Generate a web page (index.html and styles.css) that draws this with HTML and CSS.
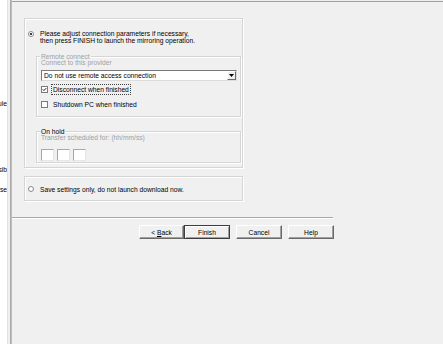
FILE: index.html
```html
<!DOCTYPE html>
<html>
<head>
<meta charset="utf-8">
<link rel="stylesheet" href="styles.css">
</head>
<body>
<div class="window">
  <aside class="side">
    <span class="side-label lbl-1">Schedule</span>
    <span class="side-label lbl-2">Possib</span>
    <span class="side-label lbl-3">Browse</span>
  </aside>
  <div class="divider"></div>
  <main class="pane">
    <section class="box box-main">
      <div class="radio-row">
        <span class="radio checked"></span>
        <span class="radio-text">Please adjust connection parameters if necessary,<br>then press FINISH to launch the mirroring operation.</span>
      </div>
      <div class="group group-remote">
        <span class="legend disabled">Remote connect</span>
        <div class="caption disabled">Connect to this provider</div>
        <div class="select">
          <span class="select-text">Do not use remote access connection</span>
          <span class="select-btn"><svg width="5" height="3" viewBox="0 0 5 3"><path d="M0 0H5L2.5 3Z" fill="#000"/></svg></span>
        </div>
        <div class="check-row row-1">
          <span class="check"><svg width="7" height="7" viewBox="0 0 7 7"><path d="M1 3.2L2.7 5L6 1.5" fill="none" stroke="#000" stroke-width="1.2"/></svg></span>
          <span class="check-text focused">Disconnect when finished</span>
        </div>
        <div class="check-row row-2">
          <span class="check"></span>
          <span class="check-text">Shutdown PC when finished</span>
        </div>
      </div>
      <div class="group group-hold">
        <span class="legend">On hold</span>
        <div class="caption disabled">Transfer scheduled for: (hh/mm/ss)</div>
        <div class="time-fields">
          <span class="field"></span>
          <span class="field"></span>
          <span class="field"></span>
        </div>
      </div>
    </section>
    <section class="box box-save">
      <span class="radio"></span>
      <span class="radio-text">Save settings only, do not launch download now.</span>
    </section>
    <hr class="sep">
    <div class="buttons">
      <button class="btn btn-back">&lt; <u>B</u>ack</button>
      <button class="btn btn-default">Finish</button>
      <button class="btn btn-cancel">Cancel</button>
      <button class="btn btn-help">Help</button>
    </div>
  </main>
</div>
</body>
</html>
```
FILE: styles.css
```css
html, body {
  margin: 0;
  padding: 0;
  background: #f0f0f0;
}
body {
  width: 443px;
  height: 344px;
  overflow: hidden;
  font-family: "Liberation Sans", Arial, sans-serif;
  font-size: 6.7px;
  line-height: 7px;
  color: #000;
}
.window {
  display: flex;
  height: 344px;
}
.side {
  width: 7px;
  flex: none;
  background: #fff;
  border-right: 1px solid #e2e2e2;
  display: flex;
  flex-direction: column;
  align-items: flex-end;
  overflow: hidden;
}
.side-label {
  display: flex;
  justify-content: flex-end;
  width: 7px;
  white-space: nowrap;
  line-height: 7px;
}
.lbl-1 { margin-top: 100px; }
.lbl-2 { margin-top: 59px; }
.lbl-3 { margin-top: 13px; }
.divider {
  width: 2px;
  flex: none;
  margin-left: 2px;
  background: linear-gradient(to right, #a0a0a0, #c8c8c8);
}
.pane {
  flex: 1;
  margin-top: 1px;
  border-top: 1px solid #a0a0a0;
}
.box {
  box-sizing: border-box;
  width: 219px;
  margin-left: 12px;
  border: 1px solid #d5d5d5;
  box-shadow: inset 1px 1px 0 #fff, 1px 1px 0 #fff;
}
.box-main {
  margin-top: 16px;
  height: 150px;
  padding: 11px 0 0 0;
}
.radio-row {
  display: flex;
  align-items: flex-start;
  padding-left: 3px;
}
.radio-row .radio {
  margin-top: 1px;
}
.radio {
  box-sizing: border-box;
  width: 6px;
  height: 6px;
  flex: none;
  border-radius: 50%;
  border: 1px solid #8a8a8a;
  background: #fff;
  margin-right: 6px;
  display: inline-flex;
  align-items: center;
  justify-content: center;
}
.radio.checked::after {
  content: "";
  width: 2px;
  height: 2px;
  border-radius: 50%;
  background: #000;
}
.radio-text {
  white-space: nowrap;
}
.group {
  position: relative;
  box-sizing: border-box;
  width: 205px;
  margin-left: 11px;
  border: 1px solid #d5d5d5;
  box-shadow: inset 1px 1px 0 #fff, 1px 1px 0 #fff;
  padding-left: 4px;
}
.legend {
  position: absolute;
  top: -4px;
  left: 3px;
  background: #f0f0f0;
  padding: 0 1px;
  white-space: nowrap;
}
.disabled {
  color: #a0a0a0;
}
.group-remote {
  margin-top: 12px;
  height: 61px;
  padding-top: 2px;
}
.caption {
  white-space: nowrap;
}
.select {
  box-sizing: border-box;
  display: flex;
  align-items: center;
  width: 196px;
  height: 11px;
  margin-top: 4px;
  background: #fff;
  border: 1px solid #7a7a7a;
  border-right-color: #dcdcdc;
  border-bottom-color: #dcdcdc;
}
.select-text {
  flex: 1;
  padding-left: 2px;
  white-space: nowrap;
}
.select-btn {
  box-sizing: border-box;
  width: 9px;
  height: 9px;
  display: flex;
  align-items: center;
  justify-content: center;
  background: #f0f0f0;
  border: 1px solid #fff;
  border-right-color: #6a6a6a;
  border-bottom-color: #6a6a6a;
}
.check-row {
  display: flex;
  align-items: center;
  height: 9px;
}
.row-1 { margin-top: 4px; }
.row-2 { margin-top: 6px; }
.check {
  box-sizing: border-box;
  width: 7px;
  height: 7px;
  flex: none;
  background: #fff;
  border: 1px solid #7a7a7a;
  display: flex;
  align-items: center;
  justify-content: center;
  margin-right: 3px;
}
.check svg { display: block; }
.check-text {
  white-space: nowrap;
  padding: 1px 1px;
  border: 1px solid transparent;
}
.check-text.focused {
  border: 1px dotted #404040;
}
.group-hold {
  margin-top: 14px;
  height: 32px;
  padding-top: 2px;
}
.time-fields {
  display: flex;
  gap: 3px;
  margin-top: 8px;
}
.field {
  box-sizing: border-box;
  width: 13px;
  height: 12px;
  background: #fff;
  border: 1px solid #a8a8a8;
  border-right-color: #e6e6e6;
  border-bottom-color: #e6e6e6;
}
.box-save {
  margin-top: 8px;
  height: 25px;
  display: flex;
  align-items: center;
  padding-left: 3px;
  padding-top: 1px;
}
.sep {
  width: 321px;
  margin: 16px 0 0 0;
  border: 0;
  height: 0;
  border-top: 1px solid #a8a8a8;
  border-bottom: 1px solid #fff;
}
.buttons {
  display: flex;
  margin-top: 6px;
  margin-left: 127px;
}
.btn {
  box-sizing: border-box;
  width: 46px;
  height: 14px;
  padding: 0;
  font-family: "Liberation Sans", Arial, sans-serif;
  font-size: 6.7px;
  color: #000;
  background: #f0f0f0;
  border: 1px solid #fff;
  border-right-color: #696969;
  border-bottom-color: #696969;
  box-shadow: inset -1px -1px 0 #a0a0a0;
}
.btn u { text-decoration: underline; }
.btn-back { width: 45px; }
.btn-default {
  border: 1px solid #3c3c3c;
  box-shadow: inset 1px 1px 0 #fff, inset -1px -1px 0 #a0a0a0;
}
.btn-cancel { margin-left: 6px; }
.btn-help { margin-left: 6px; }
```
